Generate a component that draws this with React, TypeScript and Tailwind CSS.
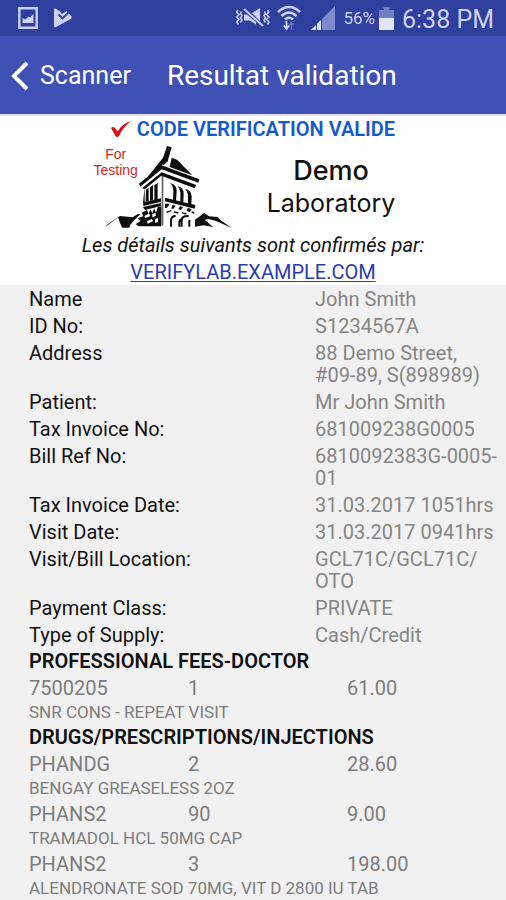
const details = [
  { label: "Name", value: "John Smith" },
  { label: "ID No:", value: "S1234567A" },
  { label: "Address", value: "88 Demo Street, #09-89, S(898989)" },
  { label: "Patient:", value: "Mr John Smith" },
  { label: "Tax Invoice No:", value: "681009238G0005" },
  { label: "Bill Ref No:", value: "6810092383G-0005-\u200b01" },
  { label: "Tax Invoice Date:", value: "31.03.2017 1051hrs" },
  { label: "Visit Date:", value: "31.03.2017 0941hrs" },
  { label: "Visit/Bill Location:", value: "GCL71C/GCL71C/\u200bOTO" },
  { label: "Payment Class:", value: "PRIVATE" },
  { label: "Type of Supply:", value: "Cash/Credit" },
];

const sections = [
  {
    title: "PROFESSIONAL FEES-DOCTOR",
    items: [{ code: "7500205", qty: "1", price: "61.00", description: "SNR CONS - REPEAT VISIT" }],
  },
  {
    title: "DRUGS/PRESCRIPTIONS/INJECTIONS",
    items: [
      { code: "PHANDG", qty: "2", price: "28.60", description: "BENGAY GREASELESS 2OZ" },
      { code: "PHANS2", qty: "90", price: "9.00", description: "TRAMADOL HCL 50MG CAP" },
      { code: "PHANS2", qty: "3", price: "198.00", description: "ALENDRONATE SOD 70MG, VIT D 2800 IU TAB" },
    ],
  },
];

function StatusBar() {
  return (
    <div className="flex h-9 items-center justify-between bg-[#2f3f9e] pl-[18px] pr-3 text-[#ccd1ee]">
      <div className="flex items-center gap-4">
        <svg className="h-[22px] w-5" viewBox="0 0 20 22" fill="none">
          <path d="M1.3 1.3h17.4v19.4H1.3z" stroke="currentColor" strokeWidth="2.4" />
          <path d="M4.500 16v-5l3 1.500 3-3 1.500 1 3.500-3.500v9z" fill="currentColor" />
        </svg>
        <svg className="h-5 w-[18px]" viewBox="0 0 18 20">
          <path d="M0 1.500Q0 0 1.500.5l4 2.500 2.500 3L12.500 3l5 5.500q.7 1.500-.7 2.500L2 19Q0 20 0 18z" fill="currentColor" />
          <path d="m4.500 6.500 4 4 7-7" fill="none" stroke="#2f3f9e" strokeWidth="1.800" />
        </svg>
      </div>
      <div className="flex items-center">
        <svg className="h-6 w-[34px]" viewBox="0 0 34 24" fill="none" stroke="currentColor">
          <path d="m2 4-1.500 2L3 8.500.8 11 3 13.500.8 16 2.500 18.500M5.500 5.500l-1 2 1.500 2-1.500 2.500 1.500 2-1.500 2.500M31.500 4 33 6l-2.500 2.500L33 11l-2.500 2.500L33 16l-1.500 2.500M28.500 5.500l1 2-1.500 2 1.500 2.500-1.500 2 1.500 2.500" strokeWidth="1.500" />
          <path d="M8 8.500h3l9 7.500v2.500l-6-4H8zM16 7l8-5v13z" fill="currentColor" stroke="none" />
          <path d="m8 3 19 17" strokeWidth="2" />
        </svg>
        <svg className="ml-[7px] h-[26px] w-6" viewBox="0 0 24 26" fill="none" stroke="currentColor" strokeWidth="2.600">
          <path d="M1 7q11-10 22 0M4.500 11q7.500-7 15 0M8 14.500q4-3.500 8 0" />
          <path d="M9.500 16v7M6.800 20.500l2.700 3.500 2.700-3.500" strokeWidth="1.800" />
          <path d="M14.500 25v-7M12.500 20l2-2.500 2 2.500" strokeWidth="1.300" opacity=".4" />
        </svg>
        <svg className="ml-2.5 h-6 w-6" viewBox="0 0 24 24">
          <path d="M0 24 24 0v24z" fill="#7f8acb" />
          <path d="M0 24 5 19v5zM6 24v-6l4-4v10z" fill="#dde0f5" />
          <path d="M5.500 17v7M10.500 12v12" stroke="#2f3f9e" />
        </svg>
        <span className="ml-2 text-[17px]">56%</span>
        <svg className="ml-1 h-[23px] w-[15px]" viewBox="0 0 15 23">
          <path d="M4.500 0h6v3H15v8H0V3h4.500z" fill="#727fc4" />
          <path d="M0 11h15v12H0z" fill="#e2e5f7" />
        </svg>
        <span className="ml-2 pt-1 text-[25px] leading-8">6:38 PM</span>
      </div>
    </div>
  );
}

function TowerLogo() {
  return (
    <svg className="h-[86px] w-32" viewBox="72 102 384 258" fill="#0d0d0d" role="img" aria-label="Demo Laboratory">
      {/* spire and roof */}
      <path d="M258 108l14 4-12 42-12 12-8-4z" />
      <path d="M272 143l16 6 46 47-68-25z" />
      <path d="M250 138l-30 38-20 24 40-24z" />
      {/* eaves */}
      <path d="M242 166l113 42-3 10-110-40-64 52-4-9z" />
      <path d="M242 187l104 38-5 10-100-38-49 40-9-2z" />
      {/* left wall */}
      <path d="M242 196h5v150h-5z" opacity=".65" />
      <path d="M195 239l8-6v40l-9 3zM207 232l9-7v45l-9 3zM220 226l10-7v51l-10 2z" />
      <path d="M190 239l-4 40 5 8v-48z" />
      <path d="M187 277l53-12v10l-53 13z" />
      <path d="M186 291l54-12v9l-48 12z" />
      <path d="M198 300l5 12 5-14 6 12 5-15 6 13 5-16 11-3v60h-68l-9-7 15-9-10-8 18-6-5-11z" />
      <path d="M190 318l14-8 4 8-15 7zM214 312l10-4v10l-10 4zM198 334l14-7 5 6-17 8zM222 328l9-4v12l-9 2z" fill="#fff" />
      {/* right wall */}
      <path d="M267 220q20 3 20 23l-2 31-9-2 1-29q0-16-10-23zM289 229q19 3 19 22l-1 26-9-1v-23q0-17-9-24zM312 237q19 3 20 22l-1 25-10-3v-19q0-17-9-25z" />
      <path d="M252 263l91 22-2 11-89-22z" />
      <path d="M252 281h12v5l-7 8h-5zM274 285l9 2-5 9h-7zM297 289l9 3-6 8-8-2zM320 294l12 3-6 9-9-3z" />
      <g fill="none" stroke="#0d0d0d" strokeWidth="6">
        <path d="M270 350v-18q0-14 14-14M302 350v-20q1-13 21-12M295 350v-14q1-8 8-8M325 350v-20" />
        <path d="M256 307l15-5M279 306l13 3M303 308l13 4M332 305l8 5" strokeWidth="4" />
      </g>
      {/* hills */}
      <path d="M72 352l45-34 38 4 14-9 10-1-18 17-13 15-3 9h-22l-6-14-6-17-31 21z" />
      <path d="M342 329l28-20 14 10 25 2 13 12 31 21-46-20-24-7-12 2 25 22-28-5-26 4z" />
    </svg>
  );
}

export default function App() {
  return (
    <div className="min-h-screen bg-[#f1f1f1] font-['Roboto',sans-serif] text-xl leading-[22px] text-[#111]">
      <StatusBar />
      <header className="flex h-[78px] items-center bg-[#3f51b5] pl-1 pt-0.5 text-white">
        <button type="button" className="flex items-center text-[25px] leading-8">
          <svg className="mx-1.5 h-[30px] w-5" viewBox="0 0 20 30" fill="none" stroke="currentColor" strokeWidth="4">
            <path d="M17 2 4 15l13 13" />
          </svg>
          <span className="ml-1">Scanner</span>
        </button>
        <h1 className="ml-9 text-[28px] leading-8">Resultat validation</h1>
      </header>

      <section className="border-t-2 border-[#e3e0e4] bg-white pb-0.5 pt-0.5 text-center">
        <h2 className="flex items-center justify-center gap-1.5 font-semibold text-[#1659cd]">
          <svg className="h-4 w-5" viewBox="0 0 20 16" fill="#d31212">
            <path d="M0 7q2-2 4 0l2.500 3.500Q12 2 20 0 12 6 8 15q-2 2-3.500 0z" />
          </svg>
          CODE VERIFICATION VALIDE
        </h2>
        <div className="flex justify-center pb-1 pr-[18px] pt-1">
          <p className="-mr-[34px] w-[46px] pt-0.5 font-['Liberation_Sans',sans-serif] text-sm leading-4 text-[#c8281e]">
            For Testing
          </p>
          <TowerLogo />
          <p className="ml-[34px] pt-2.5 font-['Inter',sans-serif] leading-[33px]">
            <span className="block text-[27px] font-medium">Demo</span>
            <span className="block text-[25px]">Laboratory</span>
          </p>
        </div>
        <p className="italic">Les détails suivants sont confirmés par:</p>
        <a href="#verifylab" className="mt-[5px] inline-block text-[#2a3cb0] underline decoration-1 underline-offset-2">
          VERIFYLAB.EXAMPLE.COM
        </a>
      </section>

      <main className="pl-[29px] pt-[3px]">
        <dl className="flex flex-col gap-[5px] pr-2">
          {details.map((row) => (
            <div key={row.label} className="grid grid-cols-[61fr_39fr]">
              <dt>{row.label}</dt>
              <dd className="text-[#858585]">{row.value}</dd>
            </div>
          ))}
        </dl>

        {sections.map((section) => (
          <section key={section.title} className="pt-1">
            <h3 className="font-semibold">{section.title}</h3>
            <table className="w-full table-fixed text-left text-[#7c7c7c]">
              {section.items.map((item) => (
                <tbody key={item.description}>
                  <tr>
                    <td className="pt-[5px]">{item.code}</td>
                    <td className="pt-[5px]">{item.qty}</td>
                    <td className="pt-[5px]">{item.price}</td>
                  </tr>
                  <tr>
                    <td colSpan={3} className="pt-[3px] text-[17px] leading-5">
                      {item.description}
                    </td>
                  </tr>
                </tbody>
              ))}
            </table>
          </section>
        ))}
      </main>
    </div>
  );
}
